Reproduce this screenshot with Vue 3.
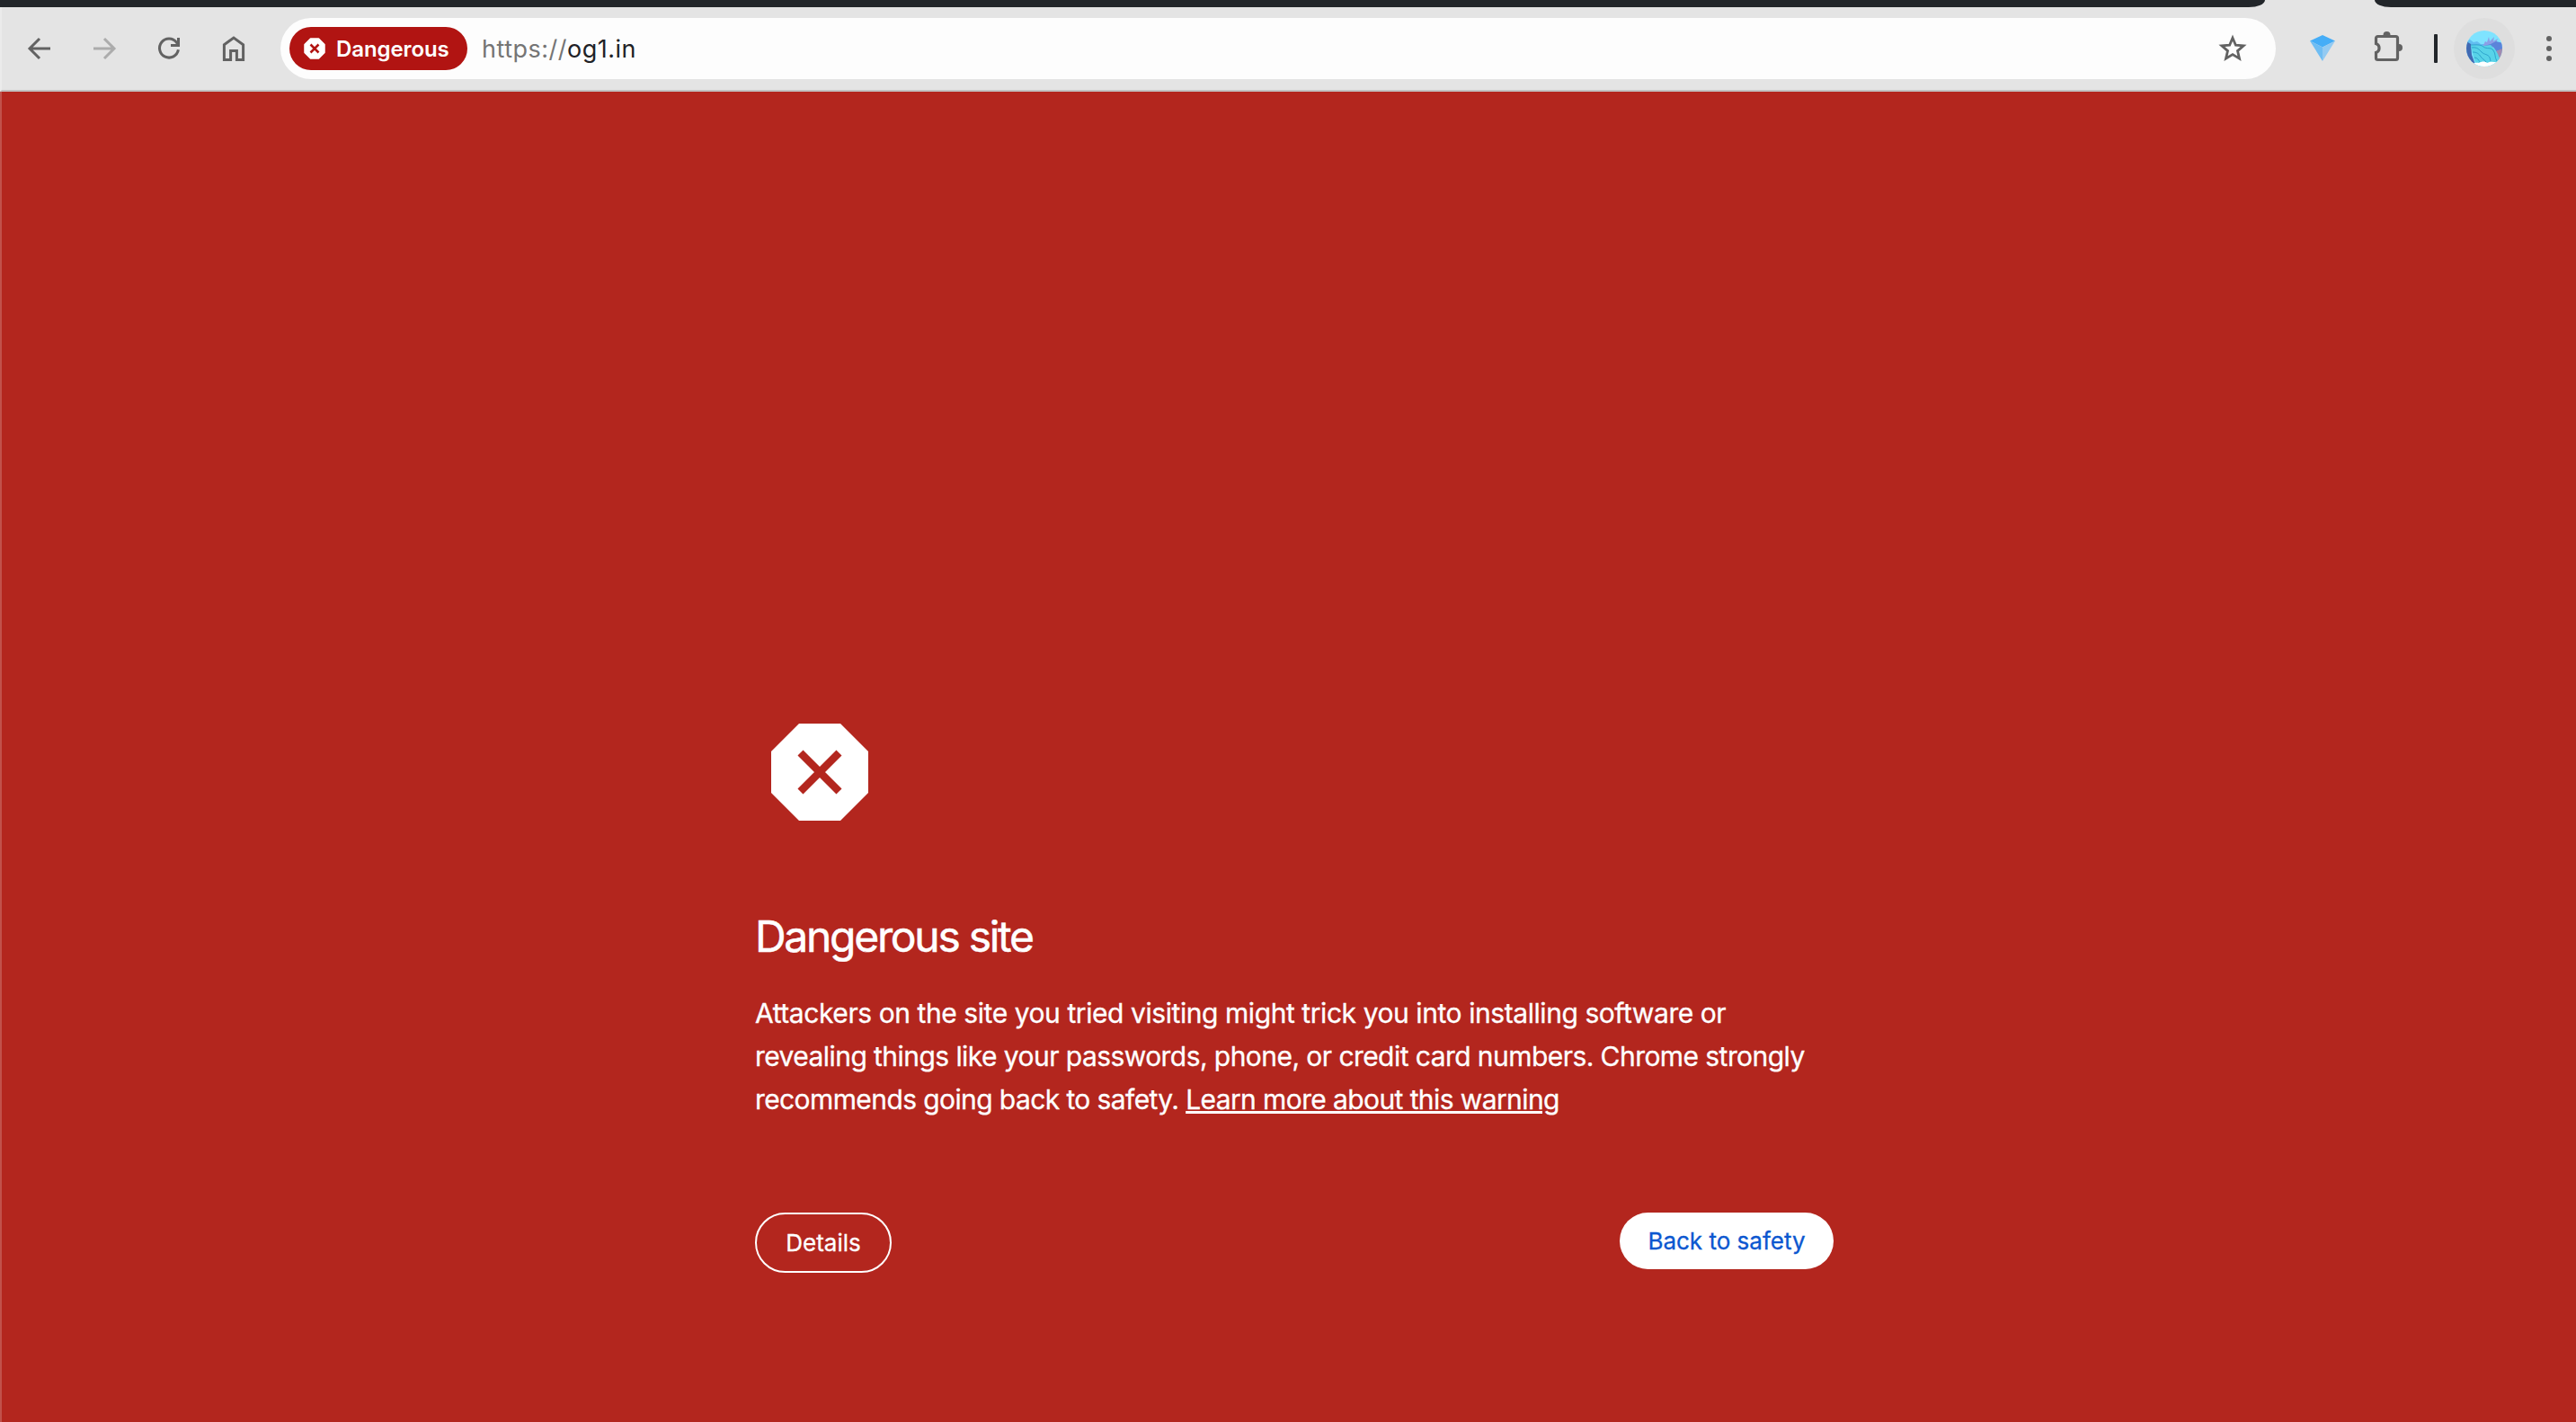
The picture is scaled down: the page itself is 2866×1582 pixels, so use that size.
<template>
  <div class="browser">
    <div class="tab-strip">
      <div class="strip-left"></div>
      <div class="active-tab"></div>
      <div class="strip-right"></div>
    </div>

    <header class="toolbar">
      <nav class="nav-buttons">
        <button type="button" class="icon-btn" aria-label="Back">
          <svg viewBox="0 0 32 32"><path d="M28 16H6M16 5L5 16l11 11" /></svg>
        </button>
        <button type="button" class="icon-btn disabled" aria-label="Forward">
          <svg viewBox="0 0 32 32"><path d="M4 16h22M16 5l11 11-11 11" /></svg>
        </button>
        <button type="button" class="icon-btn" aria-label="Reload">
          <svg viewBox="0 0 32 32">
            <path d="M26.4 17.3A10.5 10.5 0 1 1 24.4 9.2L27 12" />
            <path d="M26.5 4v8.6H18" />
          </svg>
        </button>
        <button type="button" class="icon-btn" aria-label="Home">
          <svg viewBox="0 0 32 32"><path d="M5.4 28.6V11.7L16 4l10.6 7.7v16.9h-7.2V18.4h-6.8v10.2z" /></svg>
        </button>
      </nav>

      <div class="omnibox">
        <span class="chip">
          <svg class="chip-icon" viewBox="0 0 24 24">
            <path class="octagon" d="M7.5 1h9L23 7.5v9L16.5 23h-9L1 16.5v-9z" />
            <path class="cross" d="M7.5 7.5l9 9M16.5 7.5l-9 9" />
          </svg>
          <span class="chip-label">Dangerous</span>
        </span>
        <span class="url"><span class="scheme">https://</span>{{ host }}</span>
        <svg class="star" viewBox="0 0 32 32">
          <path d="M16 4.2l3.4 8 8.7.7-6.6 5.7 2 8.5L16 22.6l-7.5 4.5 2-8.5-6.6-5.7 8.7-.7z" />
        </svg>
      </div>

      <div class="actions">
        <svg class="gem" viewBox="0 0 28 30">
          <path fill="#45adf7" d="M14 0l14 6.5-14 7-14-7z" />
          <path fill="#6fbdf3" d="M0 6.5l14 7V29z" />
          <path fill="#93caf2" d="M28 6.5l-14 7V29z" />
        </svg>
        <svg class="puzzle" viewBox="0 0 34 34">
          <path class="outline" d="M5.5 5.5h20a2 2 0 0 1 2 2v22a2 2 0 0 1-2 2h-20a2 2 0 0 1-2-2v-6a5.3 5.3 0 0 0 0-10v-6a2 2 0 0 1 2-2z" />
          <path class="knob" d="M11.5 4a4 4 0 0 1 8 0zM29 14a4 4 0 0 1 0 8z" />
        </svg>
        <span class="divider"></span>
        <span class="profile">
          <svg class="avatar" viewBox="0 0 40 40">
            <defs>
              <clipPath id="avatar-clip"><circle cx="20" cy="20" r="20" /></clipPath>
            </defs>
            <g clip-path="url(#avatar-clip)">
              <path fill="#7fe3ff" d="M0 0h40v40H0z" />
              <path fill="#62bdf0" d="M0 12l4-2 4 3 4-1 4 3h8l-4 4H2z" />
              <path fill="#8c9fe6" d="M19 16l2-4 2 1 2-6 1 5 5-5-1 5 5-3-2 5 5-1v6H19z" />
              <path fill="#5b84da" d="M20 17l7-2 6-3 8 2v8l-8 1-3-5-9-1z" />
              <path fill="#a08bb0" d="M33 23l7-3v14l-5 1z" />
              <path fill="#4169b2" d="M0 12l5 3 1 12 4 11H0z" />
              <path fill="#58d3e8" d="M5 16l14 1 8-1 5 5 3 5 3 8-4 6H12L8 30z" />
              <path class="ripple" d="M5 16c6 0 10-1 14 2s8 0 11 4 1 7 4 12M6 19c6-1 8 2 11 5s7 2 9 6l1 4M7 24c5 0 7 2 9 5s4 3 6 6M9 30c3 0 5 3 6 5" />
              <path fill="#fff" d="M6 40c0-4 5-5 8-4 3-2 7-2 9 0 4-2 7-1 11-1v6H6z" />
            </g>
          </svg>
        </span>
        <svg class="menu" viewBox="0 0 8 30">
          <circle cx="4" cy="4" r="3" />
          <circle cx="4" cy="15" r="3" />
          <circle cx="4" cy="26" r="3" />
        </svg>
      </div>
    </header>

    <main class="warning-page">
      <section class="interstitial">
        <svg class="warning-icon" viewBox="0 0 108 108">
          <path class="octagon" d="M31 0h46l31 31v46l-31 31H31L0 77V31z" />
          <path class="cross" d="M32.5 32.5l43 43M75.5 32.5l-43 43" />
        </svg>
        <h1>Dangerous site</h1>
        <p>
          <span class="line-1">Attackers on the site you tried visiting might trick you into installing software or</span><br />
          <span class="line-2">revealing things like your passwords, phone, or credit card numbers. Chrome strongly</span><br />
          <span class="line-3">recommends going back to safety. <a href="#" @click.prevent>Learn more about this warning</a></span>
        </p>
        <div class="buttons">
          <button type="button" class="btn-details">Details</button>
          <button type="button" class="btn-safety">Back to safety</button>
        </div>
      </section>
    </main>
  </div>
</template>

<script setup>
const host = 'og1.in'
</script>

<style>
body { margin: 0; background: #b3261e; }
</style>

<style scoped>
.browser {
  display: flex;
  flex-direction: column;
  height: 1582px;
  overflow: hidden;
  font-family: Inter, "Liberation Sans", sans-serif;
}
button { font-family: inherit; margin: 0; padding: 0; cursor: pointer; }
svg { display: block; flex: none; }

/* Tab strip */
.tab-strip { display: flex; height: 8px; background: #e4e4e4; }
.strip-left { width: 2520px; background: #22262a; border-bottom-right-radius: 18px 8px; }
.active-tab { width: 122px; }
.strip-right { flex: 1; background: #22262a; border-bottom-left-radius: 18px 8px; }

/* Toolbar */
.toolbar {
  display: flex;
  align-items: center;
  box-sizing: border-box;
  height: 94px;
  padding-left: 26px;
  background: #e4e4e4;
  border-left: 2px solid #ebebeb;
  border-bottom: 2px solid #c2c2c2;
}
.nav-buttons { display: flex; gap: 40px; width: 284px; }
.icon-btn { width: 32px; height: 32px; border: none; background: none; }
.icon-btn svg { width: 32px; height: 32px; fill: none; stroke: #626262; stroke-width: 3; }
.icon-btn.disabled svg { stroke: #acacac; }

.omnibox {
  display: flex;
  align-items: center;
  box-sizing: border-box;
  width: 2220px;
  height: 68px;
  padding: 0 32px 0 10px;
  border-radius: 34px;
  background: #fdfdfd;
}
.chip {
  display: flex;
  align-items: center;
  box-sizing: border-box;
  width: 198px;
  height: 48px;
  padding-left: 16px;
  gap: 12px;
  border-radius: 24px;
  background: #b11412;
  color: #fff;
}
.chip-icon { width: 24px; height: 24px; }
.octagon { fill: #fff; }
.chip-icon .octagon { stroke: #fff; stroke-width: 1.5; stroke-linejoin: round; }
.chip-icon .cross { stroke: #b11412; stroke-width: 2.5; }
.chip-label { font-size: 24px; font-weight: 600; letter-spacing: -0.1px; white-space: nowrap; }
.url { flex: 1; margin-left: 16px; font-size: 27px; letter-spacing: 0.5px; color: #1f2226; }
.scheme { color: #757575; }
.star { width: 32px; height: 32px; fill: none; stroke: #626262; stroke-width: 2.8; }

.actions { display: flex; align-items: center; }
.gem { width: 28px; height: 30px; margin-left: 38px; }
.puzzle { width: 34px; height: 34px; margin: -4px 0 0 42px; }
.puzzle .outline { fill: none; stroke: #626262; stroke-width: 3.2; }
.puzzle .knob { fill: #626262; }
.divider { width: 4px; height: 32px; margin-left: 34px; border-radius: 1px; background: #22262a; }
.profile {
  display: flex;
  align-items: center;
  justify-content: center;
  width: 68px;
  height: 68px;
  margin-left: 18px;
  border-radius: 50%;
  background: #dedede;
}
.avatar { width: 40px; height: 40px; }
.ripple { fill: none; stroke: #2a9fca; stroke-width: 0.9; }
.menu { width: 8px; height: 30px; margin-left: 34px; fill: #626262; }

/* Warning page */
.warning-page {
  flex: 1;
  background: #b3261e;
  color: #fff;
  border-left: 2px solid #c1514b;
}
.interstitial { width: 1200px; margin: 0 0 0 838px; padding-top: 703px; }
.warning-icon { width: 108px; height: 108px; margin-left: 18px; }
.warning-icon .cross { stroke: #b3261e; stroke-width: 8.5; }
h1 {
  margin: 100px 0 0;
  font-size: 48px;
  font-weight: 400;
  line-height: 58px;
  letter-spacing: -2.3px;
  white-space: nowrap;
  -webkit-text-stroke: 0.5px currentColor;
}
p {
  margin: 32px 0 0;
  font-size: 30px;
  line-height: 48px;
  white-space: nowrap;
  -webkit-text-stroke: 0.3px currentColor;
}
.line-1 { letter-spacing: -0.43px; }
.line-2 { letter-spacing: -0.56px; }
.line-3 { letter-spacing: -0.6px; }
a { color: #fff; text-decoration: underline; text-decoration-thickness: 3px; }
.buttons {
  display: flex;
  justify-content: space-between;
  align-items: flex-start;
  margin-top: 102px;
}
.btn-details, .btn-safety {
  box-sizing: border-box;
  font-size: 26px;
  white-space: nowrap;
  -webkit-text-stroke: 0.3px currentColor;
}
.btn-details {
  width: 152px;
  height: 67px;
  border: 2px solid #fff;
  border-radius: 34px;
  background: transparent;
  color: #fff;
}
.btn-safety {
  width: 238px;
  height: 63px;
  border: none;
  border-radius: 32px;
  background: #fff;
  color: #0b57d0;
}
</style>
